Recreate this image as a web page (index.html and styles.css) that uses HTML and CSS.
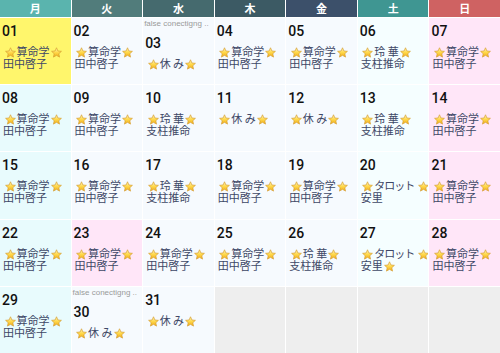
FILE: index.html
```html
<!DOCTYPE html>
<html lang="ja">
<head>
<meta charset="utf-8">
<link rel="stylesheet" href="styles.css">
</head>
<body>
<svg class="defs" width="0" height="0" aria-hidden="true">
  <defs>
    <linearGradient id="sg" x1="0" y1="0" x2="0" y2="1">
      <stop offset="0" stop-color="#fff6b8"/>
      <stop offset="0.5" stop-color="#ffd84a"/>
      <stop offset="1" stop-color="#f0ab1c"/>
    </linearGradient>
    <symbol id="star" viewBox="0 0 10 10">
      <path d="M5 0.7 L6.29 3.62 L9.47 3.95 L7.09 6.08 L7.76 9.2 L5 7.6 L2.24 9.2 L2.91 6.08 L0.53 3.95 L3.71 3.62Z" fill="url(#sg)" stroke="#d49a2a" stroke-width="0.6" stroke-linejoin="round"/>
    </symbol>
  </defs>
</svg>
<div class="cal">
  <div class="hd c-mon">月</div>
  <div class="hd c-tue">火</div>
  <div class="hd c-wed">水</div>
  <div class="hd c-thu">木</div>
  <div class="hd c-fri">金</div>
  <div class="hd c-sat">土</div>
  <div class="hd c-sun">日</div>

  <!-- row 1 -->
  <div class="day mon today"><span class="num">01</span><div class="ev"><svg class="st"><use href="#star"/></svg>算命学<svg class="st"><use href="#star"/></svg><br>田中啓子</div></div>
  <div class="day wk"><span class="num">02</span><div class="ev"><svg class="st"><use href="#star"/></svg>算命学<svg class="st"><use href="#star"/></svg><br>田中啓子</div></div>
  <div class="day wk"><div class="label">false conectigng ..</div><span class="num">03</span><div class="ev"><svg class="st"><use href="#star"/></svg>休 み<svg class="st"><use href="#star"/></svg></div></div>
  <div class="day wk"><span class="num">04</span><div class="ev"><svg class="st"><use href="#star"/></svg>算命学<svg class="st"><use href="#star"/></svg><br>田中啓子</div></div>
  <div class="day wk"><span class="num">05</span><div class="ev"><svg class="st"><use href="#star"/></svg>算命学<svg class="st"><use href="#star"/></svg><br>田中啓子</div></div>
  <div class="day sat"><span class="num">06</span><div class="ev"><svg class="st"><use href="#star"/></svg>玲 華<svg class="st"><use href="#star"/></svg><br>支柱推命</div></div>
  <div class="day sun"><span class="num">07</span><div class="ev"><svg class="st"><use href="#star"/></svg>算命学<svg class="st"><use href="#star"/></svg><br>田中啓子</div></div>

  <!-- row 2 -->
  <div class="day mon"><span class="num">08</span><div class="ev"><svg class="st"><use href="#star"/></svg>算命学<svg class="st"><use href="#star"/></svg><br>田中啓子</div></div>
  <div class="day wk"><span class="num">09</span><div class="ev"><svg class="st"><use href="#star"/></svg>算命学<svg class="st"><use href="#star"/></svg><br>田中啓子</div></div>
  <div class="day wk"><span class="num">10</span><div class="ev"><svg class="st"><use href="#star"/></svg>玲 華<svg class="st"><use href="#star"/></svg><br>支柱推命</div></div>
  <div class="day wk"><span class="num">11</span><div class="ev"><svg class="st"><use href="#star"/></svg>休 み<svg class="st"><use href="#star"/></svg></div></div>
  <div class="day wk"><span class="num">12</span><div class="ev"><svg class="st"><use href="#star"/></svg>休 み<svg class="st"><use href="#star"/></svg></div></div>
  <div class="day sat"><span class="num">13</span><div class="ev"><svg class="st"><use href="#star"/></svg>玲 華<svg class="st"><use href="#star"/></svg><br>支柱推命</div></div>
  <div class="day sun"><span class="num">14</span><div class="ev"><svg class="st"><use href="#star"/></svg>算命学<svg class="st"><use href="#star"/></svg><br>田中啓子</div></div>

  <!-- row 3 -->
  <div class="day mon"><span class="num">15</span><div class="ev"><svg class="st"><use href="#star"/></svg>算命学<svg class="st"><use href="#star"/></svg><br>田中啓子</div></div>
  <div class="day wk"><span class="num">16</span><div class="ev"><svg class="st"><use href="#star"/></svg>算命学<svg class="st"><use href="#star"/></svg><br>田中啓子</div></div>
  <div class="day wk"><span class="num">17</span><div class="ev"><svg class="st"><use href="#star"/></svg>玲 華<svg class="st"><use href="#star"/></svg><br>支柱推命</div></div>
  <div class="day wk"><span class="num">18</span><div class="ev"><svg class="st"><use href="#star"/></svg>算命学<svg class="st"><use href="#star"/></svg><br>田中啓子</div></div>
  <div class="day wk"><span class="num">19</span><div class="ev"><svg class="st"><use href="#star"/></svg>算命学<svg class="st"><use href="#star"/></svg><br>田中啓子</div></div>
  <div class="day sat"><span class="num">20</span><div class="ev"><svg class="st"><use href="#star"/></svg><span class="kata">タロット</span><svg class="st wide"><use href="#star"/></svg><br>安里</div></div>
  <div class="day sun"><span class="num">21</span><div class="ev"><svg class="st"><use href="#star"/></svg>算命学<svg class="st"><use href="#star"/></svg><br>田中啓子</div></div>

  <!-- row 4 -->
  <div class="day mon"><span class="num">22</span><div class="ev"><svg class="st"><use href="#star"/></svg>算命学<svg class="st"><use href="#star"/></svg><br>田中啓子</div></div>
  <div class="day sun"><span class="num">23</span><div class="ev"><svg class="st"><use href="#star"/></svg>算命学<svg class="st"><use href="#star"/></svg><br>田中啓子</div></div>
  <div class="day wk"><span class="num">24</span><div class="ev"><svg class="st"><use href="#star"/></svg>算命学<svg class="st"><use href="#star"/></svg><br>田中啓子</div></div>
  <div class="day wk"><span class="num">25</span><div class="ev"><svg class="st"><use href="#star"/></svg>算命学<svg class="st"><use href="#star"/></svg><br>田中啓子</div></div>
  <div class="day wk"><span class="num">26</span><div class="ev"><svg class="st"><use href="#star"/></svg>玲 華<svg class="st"><use href="#star"/></svg><br>支柱推命</div></div>
  <div class="day sat"><span class="num">27</span><div class="ev"><svg class="st"><use href="#star"/></svg><span class="kata">タロット</span><svg class="st wide"><use href="#star"/></svg><br>安里<svg class="st"><use href="#star"/></svg></div></div>
  <div class="day sun"><span class="num">28</span><div class="ev"><svg class="st"><use href="#star"/></svg>算命学<svg class="st"><use href="#star"/></svg><br>田中啓子</div></div>

  <!-- row 5 -->
  <div class="day mon"><span class="num">29</span><div class="ev"><svg class="st"><use href="#star"/></svg>算命学<svg class="st"><use href="#star"/></svg><br>田中啓子</div></div>
  <div class="day wk"><div class="label">false conectigng ..</div><span class="num">30</span><div class="ev"><svg class="st"><use href="#star"/></svg>休 み<svg class="st"><use href="#star"/></svg></div></div>
  <div class="day wk"><span class="num">31</span><div class="ev"><svg class="st"><use href="#star"/></svg>休 み<svg class="st"><use href="#star"/></svg></div></div>
  <div class="day empty"></div>
  <div class="day empty"></div>
  <div class="day empty"></div>
  <div class="day empty"></div>
</div>
</body>
</html>
```

FILE: styles.css
```css
html, body {
  margin: 0;
  padding: 0;
  background: #ffffff;
}

.defs {
  position: absolute;
  width: 0;
  height: 0;
  overflow: hidden;
}

.cal {
  display: grid;
  grid-template-columns: repeat(7, 1fr);
  grid-template-rows: 17px repeat(5, 1fr);
  gap: 1px;
  width: 500px;
  height: 353px;
}

.hd {
  display: flex;
  align-items: center;
  justify-content: center;
  color: #ffffff;
  font: bold 11px/17px "Noto Sans CJK JP", sans-serif;
}

.c-mon { background: #5ab4ae; }
.c-tue { background: #517c7b; }
.c-wed { background: #456a6e; }
.c-thu { background: #3c5a64; }
.c-fri { background: #3c506a; }
.c-sat { background: #3f9692; }
.c-sun { background: #cf6262; }

.day {
  padding: 0 0 0 2px;
  overflow: hidden;
  min-width: 0;
}

.mon { background: #e8fbfd; }
.wk { background: #f6fafe; }
.sat { background: #f5feff; }
.sun { background: #ffe6f8; }
.today { background: #fff66c; }
.empty { background: #eeeeee; }

.label {
  margin-left: -1px;
  height: 12px;
  font: 8px/12px "Liberation Sans", sans-serif;
  color: #9a9a9a;
  white-space: nowrap;
}

.num {
  display: block;
  padding-top: 5px;
  font: 500 14px/16px Roboto, sans-serif;
  color: #111111;
}

.ev {
  margin-top: 7px;
  padding-left: 1px;
  font: 11px/10px "Noto Sans CJK JP", sans-serif;
  color: #3e4866;
  white-space: nowrap;
}

.kata {
  letter-spacing: -1px;
}

.st {
  width: 11px;
  height: 11px;
  margin: 0 1px 0 1px;
  vertical-align: -2px;
}

.st:first-child {
  margin-left: 1.5px;
}

.st.wide {
  margin-left: 4px;
}
```
